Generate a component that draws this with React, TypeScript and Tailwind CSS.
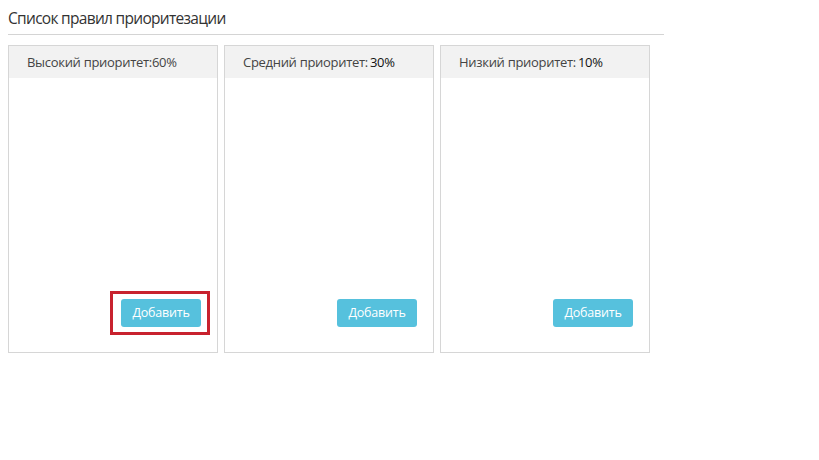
import React from 'react';

const rules = [
  { label: 'Высокий приоритет:', value: '60%', highlight: true, boldValue: false },
  { label: 'Средний приоритет:', value: '30%', highlight: false, boldValue: true },
  { label: 'Низкий приоритет:', value: '10%', highlight: false, boldValue: true },
];

export default function App() {
  return (
    <div className="w-[819px] h-[460px] bg-white px-2 pt-[7px]" style={{ fontFamily: '"Open Sans", "DejaVu Sans", sans-serif' }}>
      <div className="w-[656px] border-b border-[#d4d4d4] pb-[5px]">
        <h2 className="text-[15.5px] leading-[22px] text-[#333] tracking-[-0.7px]">
          Список правил приоритезации
        </h2>
      </div>
      <div className="flex gap-[6px] mt-[10px]">
        {rules.map((r) => (
          <div key={r.label} className="w-[210px] h-[308px] border border-[#d6d6d6] flex flex-col">
            <div className="h-[32px] bg-[#f2f2f2] flex items-center pl-[18px] pt-[1px] text-[13px] text-[#444] tracking-[-0.3px]">
              <span>{r.label}</span>
              <span className={r.boldValue ? 'text-[#111] text-[13px] ml-[2px]' : 'text-[#444]'}>{r.value}</span>
            </div>
            <div className="flex-1 flex items-end justify-end pr-[16px] pb-[25px]">
              <div className="relative">
                <button className="w-[80px] h-[28px] rounded-[3px] bg-[#56c1dd] text-white text-[12.5px] tracking-[-0.2px]">
                  Добавить
                </button>
                {r.highlight && (
                  <div className="absolute left-[-11px] top-[-8px] w-[100px] h-[44px] border-[3px] border-[#c8222e]" />
                )}
              </div>
            </div>
          </div>
        ))}
      </div>
    </div>
  );
}
